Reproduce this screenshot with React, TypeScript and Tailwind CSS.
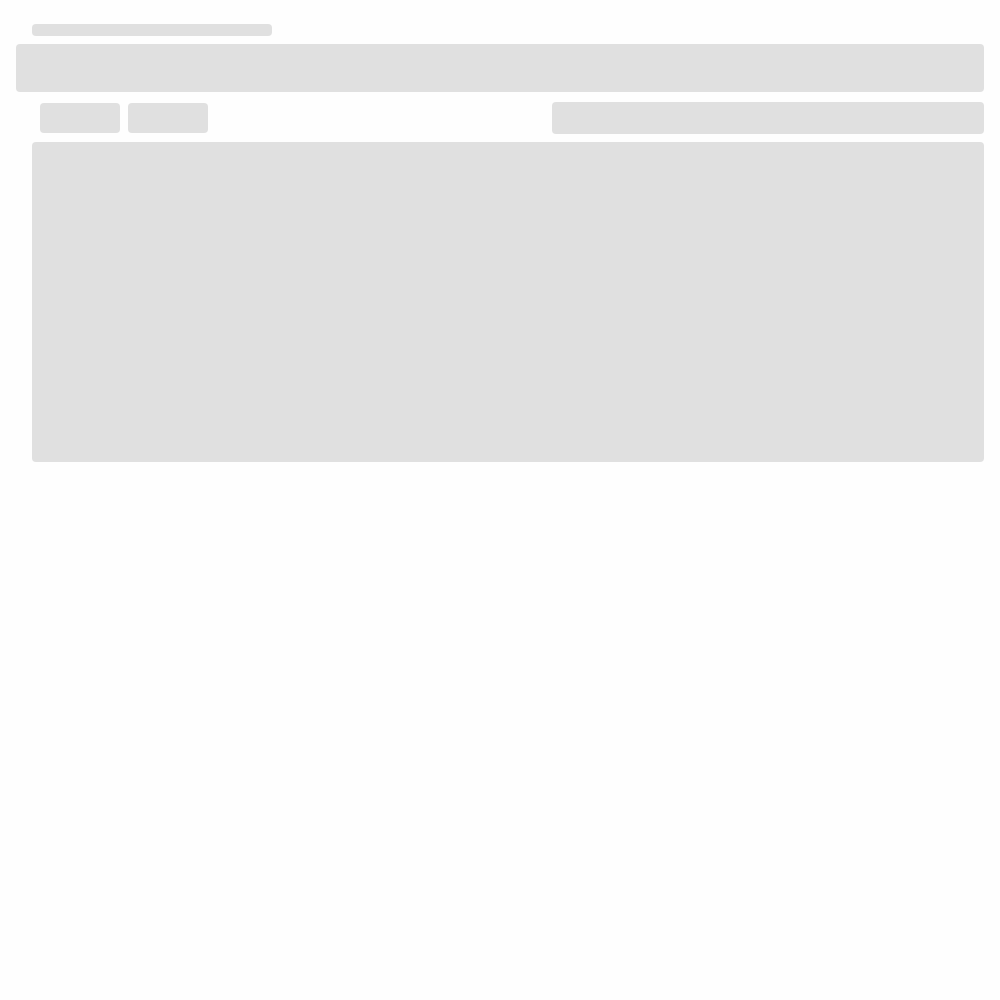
export default function App() {
  return (
    <div className="min-h-screen bg-[#fefefe] px-4 pt-6">
      {/* Title placeholder */}
      <div className="ml-4 h-3 w-60 rounded bg-[#e0e0e0]" />

      {/* Header bar */}
      <div className="mt-2 h-12 w-full rounded bg-[#e0e0e0]" />

      {/* Toolbar */}
      <div className="mt-2.5 flex h-8 items-center justify-between pl-6">
        <div className="flex gap-2">
          <div className="h-[30px] w-20 rounded bg-[#e0e0e0]" />
          <div className="h-[30px] w-20 rounded bg-[#e0e0e0]" />
        </div>
        <div className="h-8 w-[432px] rounded bg-[#e0e0e0]" />
      </div>

      {/* Content panel */}
      <div className="ml-4 mt-2 h-80 rounded bg-[#e0e0e0]" />
    </div>
  )
}
